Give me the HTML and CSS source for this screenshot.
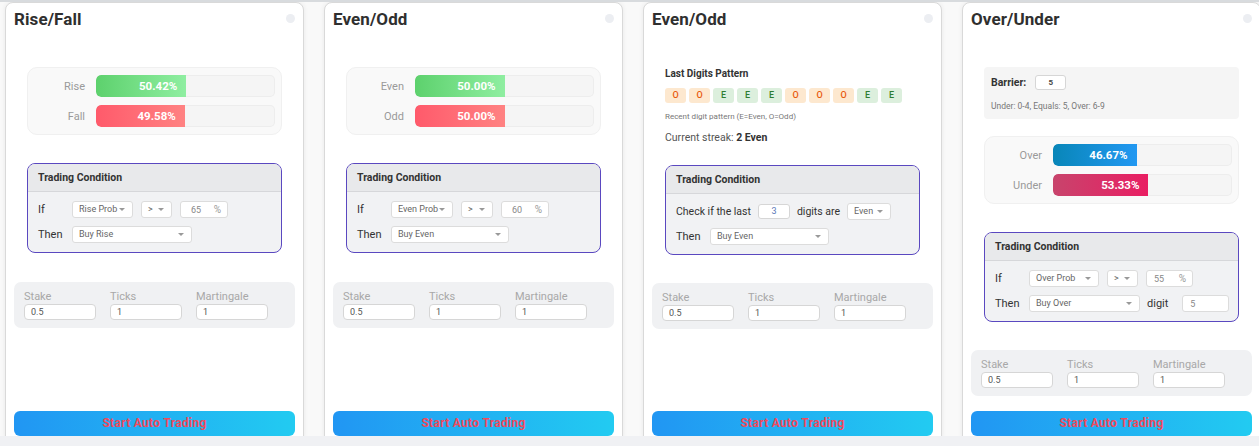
FILE: index.html
```html
<!DOCTYPE html>
<html>
<head>
<meta charset="utf-8">
<title>Auto Trading</title>
<link rel="stylesheet" href="styles.css">
</head>
<body>
<div class="topline"></div>
<main class="board">

  <section class="card">
    <header class="card-head"><h2>Rise/Fall</h2><span class="dot"></span></header>
    <div class="stats inner">
      <div class="stat-row"><span class="stat-label">Rise</span><div class="track"><div class="fill green" style="width:50.42%">50.42%</div></div></div>
      <div class="stat-row"><span class="stat-label">Fall</span><div class="track"><div class="fill red" style="width:49.58%">49.58%</div></div></div>
    </div>
    <div class="cond inner gap-std">
      <div class="cond-head">Trading Condition</div>
      <div class="cond-body">
        <div class="cond-row"><span class="lbl">If</span><span class="sel" style="width:61px">Rise Prob<i class="caret"></i></span><span class="sel" style="width:31px">&gt;<i class="caret"></i></span><span class="num" style="width:48px"><b>65</b><em>%</em></span></div>
        <div class="cond-row"><span class="lbl">Then</span><span class="sel" style="width:120px">Buy Rise<i class="caret"></i></span></div>
      </div>
    </div>
    <div class="params p-std">
      <div class="field"><label>Stake</label><span class="inp">0.5</span></div>
      <div class="field"><label>Ticks</label><span class="inp">1</span></div>
      <div class="field"><label>Martingale</label><span class="inp">1</span></div>
    </div>
    <button class="start">Start Auto Trading</button>
  </section>

  <section class="card">
    <header class="card-head"><h2>Even/Odd</h2><span class="dot"></span></header>
    <div class="stats inner">
      <div class="stat-row"><span class="stat-label">Even</span><div class="track"><div class="fill green" style="width:50%">50.00%</div></div></div>
      <div class="stat-row"><span class="stat-label">Odd</span><div class="track"><div class="fill red" style="width:50%">50.00%</div></div></div>
    </div>
    <div class="cond inner gap-std">
      <div class="cond-head">Trading Condition</div>
      <div class="cond-body">
        <div class="cond-row"><span class="lbl">If</span><span class="sel" style="width:62px">Even Prob<i class="caret"></i></span><span class="sel" style="width:32px">&gt;<i class="caret"></i></span><span class="num" style="width:48px"><b>60</b><em>%</em></span></div>
        <div class="cond-row"><span class="lbl">Then</span><span class="sel" style="width:118px">Buy Even<i class="caret"></i></span></div>
      </div>
    </div>
    <div class="params p-std">
      <div class="field"><label>Stake</label><span class="inp">0.5</span></div>
      <div class="field"><label>Ticks</label><span class="inp">1</span></div>
      <div class="field"><label>Martingale</label><span class="inp">1</span></div>
    </div>
    <button class="start">Start Auto Trading</button>
  </section>

  <section class="card">
    <header class="card-head"><h2>Even/Odd</h2><span class="dot"></span></header>
    <div class="pattern inner">
      <h3>Last Digits Pattern</h3>
      <div class="digits">
        <span class="d o">O</span><span class="d o">O</span><span class="d e">E</span><span class="d e">E</span><span class="d e">E</span><span class="d o">O</span><span class="d o">O</span><span class="d o">O</span><span class="d e">E</span><span class="d e">E</span>
      </div>
      <p class="hint">Recent digit pattern (E=Even, O=Odd)</p>
      <p class="streak">Current streak: <strong>2 Even</strong></p>
    </div>
    <div class="cond inner gap-pattern">
      <div class="cond-head">Trading Condition</div>
      <div class="cond-body">
        <div class="cond-row check-row"><span class="lbl wide">Check if the last</span><span class="box-num" style="width:32px">3</span><span class="lbl-mid">digits are</span><span class="sel" style="width:44px">Even<i class="caret"></i></span></div>
        <div class="cond-row"><span class="lbl">Then</span><span class="sel" style="width:119px">Buy Even<i class="caret"></i></span></div>
      </div>
    </div>
    <div class="params p-pattern">
      <div class="field"><label>Stake</label><span class="inp">0.5</span></div>
      <div class="field"><label>Ticks</label><span class="inp">1</span></div>
      <div class="field"><label>Martingale</label><span class="inp">1</span></div>
    </div>
    <button class="start">Start Auto Trading</button>
  </section>

  <section class="card">
    <header class="card-head"><h2>Over/Under</h2><span class="dot"></span></header>
    <div class="barrier inner">
      <div class="barrier-row"><span class="barrier-label">Barrier:</span><span class="barrier-inp">5</span></div>
      <p class="barrier-hint">Under: 0-4, Equals: 5, Over: 6-9</p>
    </div>
    <div class="stats inner gap-barrier">
      <div class="stat-row"><span class="stat-label">Over</span><div class="track"><div class="fill blue" style="width:46.67%">46.67%</div></div></div>
      <div class="stat-row"><span class="stat-label">Under</span><div class="track"><div class="fill pink" style="width:53.33%">53.33%</div></div></div>
    </div>
    <div class="cond inner gap-ou">
      <div class="cond-head">Trading Condition</div>
      <div class="cond-body">
        <div class="cond-row"><span class="lbl">If</span><span class="sel" style="width:70px">Over Prob<i class="caret"></i></span><span class="sel" style="width:31px">&gt;<i class="caret"></i></span><span class="num" style="width:47px"><b>55</b><em>%</em></span></div>
        <div class="cond-row"><span class="lbl">Then</span><span class="sel" style="width:111px">Buy Over<i class="caret"></i></span><span class="lbl-mid digit">digit</span><span class="num" style="width:47px"><b>5</b></span></div>
      </div>
    </div>
    <div class="params p-ou">
      <div class="field"><label>Stake</label><span class="inp">0.5</span></div>
      <div class="field"><label>Ticks</label><span class="inp">1</span></div>
      <div class="field"><label>Martingale</label><span class="inp">1</span></div>
    </div>
    <button class="start">Start Auto Trading</button>
  </section>

</main>
<div class="bottomline"></div>
</body>
</html>
```

FILE: styles.css
```css
* { box-sizing: border-box; margin: 0; padding: 0; }

body {
  width: 1259px;
  height: 446px;
  overflow: hidden;
  background: #f0f1f4;
  font-family: Roboto, "Noto Sans", Arial, sans-serif;
  color: #333;
}

.topline { height: 2px; background: #d8dbde; }
.bottomline { height: 10px; background: #f0f1f4; }

.board {
  display: flex;
  gap: 20px;
  padding-left: 5px;
  height: 434px;
  overflow: hidden;
  background: #f9f9f9;
}

.card {
  flex: none;
  width: 299px;
  height: 443px;
  background: #fff;
  border: 1px solid #d9d9d9;
  border-radius: 8px;
  box-shadow: 0 0 5px rgba(0, 0, 0, 0.07);
  padding: 0 8px 8px;
  display: flex;
  flex-direction: column;
}

.card-head {
  height: 31px;
  display: flex;
  align-items: center;
  justify-content: space-between;
}
.card-head h2 { font-size: 17px; font-weight: 700; color: #2f2f2f; letter-spacing: 0.1px; }
.dot { width: 9px; height: 9px; border-radius: 50%; background: #eceef2; }

.inner { margin-left: 13px; margin-right: 13px; }

/* probability stats */
.stats {
  margin-top: 33px;
  background: #f9f9f9;
  border: 1px solid #f0f0f0;
  border-radius: 10px;
  padding: 7px 6px 7px 9px;
  display: flex;
  flex-direction: column;
  gap: 8px;
}
.stat-row { display: flex; align-items: center; }
.stat-label {
  width: 48px;
  margin-right: 11px;
  text-align: right;
  font-size: 11px;
  color: #9a9a9a;
}
.track {
  flex: 1;
  height: 22px;
  background: #f5f5f5;
  border-radius: 5px;
  box-shadow: inset 0 0 0 1px #ededed;
  overflow: hidden;
}
.fill {
  height: 100%;
  border-radius: 5px 0 0 5px;
  color: #fff;
  font-size: 11.5px;
  font-weight: 700;
  line-height: 22px;
  text-align: right;
  padding-right: 9px;
}
.fill.green { background: linear-gradient(90deg, #5dd16d, #8feea1); }
.fill.red { background: linear-gradient(90deg, #ff5a6b, #ff8282); }
.fill.blue { background: linear-gradient(90deg, #0886b8, #2298f2); }
.fill.pink { background: linear-gradient(90deg, #c8446c, #e91e63); }

/* trading condition */
.cond {
  border: 1px solid #5a48c0;
  border-radius: 8px;
  overflow: hidden;
  background: #f1f2f4;
}
.gap-std { margin-top: 28px; }
.gap-pattern { margin-top: 20px; }
.gap-ou { margin-top: 28px; }
.cond-head {
  height: 28px;
  background: #e8e9eb;
  border-bottom: 1px solid #d6d7da;
  font-size: 10.5px;
  font-weight: 700;
  line-height: 27px;
  padding-left: 10px;
  color: #333;
}
.cond-body {
  padding: 9px 10px;
  display: flex;
  flex-direction: column;
  gap: 8px;
}
.cond-row {
  display: flex;
  align-items: center;
  gap: 8px;
  font-size: 11px;
  color: #333;
  height: 17px;
}
.check-row { font-size: 10.5px; gap: 7px; }
.lbl { width: 26px; flex: none; }
.lbl.wide { width: auto; }
.lbl-mid { flex: none; }
.digit { margin-left: -1px; margin-right: 6px; }

.sel {
  position: relative;
  flex: none;
  height: 17px;
  background: #fff;
  border: 1px solid #dcdcdc;
  border-radius: 3px;
  font-size: 9px;
  line-height: 15px;
  color: #666;
  padding-left: 6px;
}
.caret {
  position: absolute;
  right: 7px;
  top: 6px;
  width: 0;
  height: 0;
  border-left: 3px solid transparent;
  border-right: 3px solid transparent;
  border-top: 3px solid #999;
}
.num {
  flex: none;
  height: 17px;
  background: #fff;
  border: 1px solid #dcdcdc;
  border-radius: 3px;
  display: flex;
  align-items: center;
  justify-content: space-between;
  padding: 0 6px 0 10px;
  font-size: 9px;
  color: #888;
}
.num b { font-weight: 400; }
.num em { font-style: normal; font-size: 10px; color: #999; }
.gap-ou .cond-row .num:last-child { padding-left: 7px; }
.box-num {
  flex: none;
  height: 15px;
  background: #fff;
  border: 1px solid #d6d6d6;
  border-radius: 3px;
  font-size: 9px;
  line-height: 13px;
  text-align: center;
  color: #5b76b8;
}

/* params */
.params {
  background: #f0f1f3;
  border-radius: 7px;
  padding: 8px 10px;
  display: grid;
  grid-template-columns: repeat(3, 72px);
  column-gap: 14px;
}
.p-std { margin-top: 29px; }
.p-pattern { margin-top: 28px; }
.p-ou { margin-top: 28px; }
.field label {
  display: block;
  font-size: 11px;
  line-height: 13px;
  color: #a8a8a8;
  margin-bottom: 1px;
}
.inp {
  display: block;
  height: 16px;
  background: #fff;
  border: 1px solid #d6d6d6;
  border-radius: 4px;
  font-size: 9px;
  line-height: 14px;
  color: #555;
  padding-left: 6px;
}

/* button */
.start {
  margin-top: auto;
  height: 25px;
  border: none;
  border-radius: 6px;
  background: linear-gradient(90deg, #2196f3, #22cbf1);
  color: #f04a5c;
  font-family: Roboto, "Open Sans", sans-serif;
  font-size: 12px;
  font-weight: 700;
  letter-spacing: 0.3px;
  line-height: 25px;
  flex: none;
}

/* pattern card */
.pattern { margin-top: 33px; }
.pattern h3 { font-size: 10px; font-weight: 700; line-height: 14px; color: #333; }
.digits { display: flex; gap: 3px; margin-top: 7px; }
.d {
  width: 21px;
  height: 15px;
  border-radius: 3px;
  font-size: 9px;
  font-weight: 500;
  line-height: 15px;
  text-align: center;
}
.d.o { background: #fde8cf; color: #e8590c; }
.d.e { background: #dcefdd; color: #2e7d32; }
.hint { font-size: 8px; line-height: 12px; color: #777; margin-top: 8px; }
.streak { font-size: 10.5px; line-height: 14px; color: #555; margin-top: 8px; }
.streak strong { color: #333; font-weight: 700; }

/* barrier */
.barrier {
  margin-top: 33px;
  background: #f5f5f5;
  border-radius: 4px;
  padding: 8px 7px 7px;
}
.barrier-row { display: flex; align-items: center; height: 15px; gap: 9px; }
.barrier-label { font-size: 10.5px; font-weight: 700; color: #333; }
.barrier-inp {
  width: 31px;
  height: 15px;
  background: #fff;
  border: 1px solid #d6d6d6;
  border-radius: 3px;
  font-size: 8px;
  font-weight: 700;
  line-height: 13px;
  text-align: center;
  color: #444;
}
.barrier-hint { font-size: 8.5px; line-height: 12px; color: #777; margin-top: 10px; }
.gap-barrier { margin-top: 17px; }
```
